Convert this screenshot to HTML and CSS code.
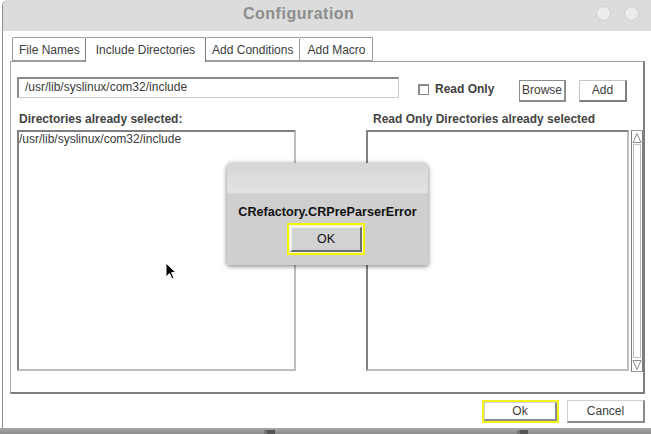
FILE: index.html
```html
<!DOCTYPE html>
<html>
<head>
<meta charset="utf-8">
<link rel="stylesheet" href="styles.css">
</head>
<body>
<div class="window">
  <div class="titlebar">
    <span class="title">Configuration</span>
    <span class="wbtn wbtn-1"></span>
    <span class="wbtn wbtn-2"></span>
  </div>
  <div class="content">
    <div class="tabs">
      <div class="tab tab-first">File Names</div>
      <div class="tab tab-active">Include Directories</div>
      <div class="tab">Add Conditions</div>
      <div class="tab tab-last">Add Macro</div>
    </div>
    <div class="panel">
      <div class="row-input">
        <div class="field">/usr/lib/syslinux/com32/include</div>
        <div class="check"></div>
        <div class="check-label">Read Only</div>
        <div class="btn btn-browse">Browse</div>
        <div class="btn btn-add">Add</div>
      </div>
      <div class="columns">
        <div class="col-left">
          <div class="label">Directories already selected:</div>
          <div class="list list-left">
            <div class="list-item">/usr/lib/syslinux/com32/include</div>
          </div>
        </div>
        <div class="col-right">
          <div class="label label-right">Read Only Directories already selected</div>
          <div class="list-wrap">
            <div class="list list-right"></div>
            <div class="scrollbar">
              <div class="sb-btn">
                <svg width="10" height="12" viewBox="0 0 10 12"><path d="M1 10.5 L5 1.5 L9 10.5 Z" fill="none" stroke="#8a8a8a" stroke-width="1"/></svg>
              </div>
              <div class="sb-track"><div class="sb-thumb"></div></div>
              <div class="sb-btn">
                <svg width="10" height="12" viewBox="0 0 10 12"><path d="M1 1.5 L5 10.5 L9 1.5 Z" fill="none" stroke="#8a8a8a" stroke-width="1"/></svg>
              </div>
            </div>
          </div>
        </div>
      </div>
    </div>
    <div class="footer">
      <div class="focus-ring"><div class="fbtn">Ok</div></div>
      <div class="fbtn fbtn-cancel">Cancel</div>
    </div>
  </div>
</div>
<div class="bottom-strip">
  <span class="mark mark-1"></span>
  <span class="mark mark-2"></span>
</div>

<div class="dialog">
  <div class="dialog-title"></div>
  <div class="dialog-body">
    <div class="dialog-msg">CRefactory.CRPreParserError</div>
    <div class="dialog-ring"><div class="dialog-ok">OK</div></div>
  </div>
</div>

<svg class="cursor" width="12" height="19" viewBox="0 0 12 19">
  <path d="M1 1 L1 15 L4.5 11.5 L7 17 L9 16 L6.6 10.6 L11 10.6 Z" fill="#000" stroke="#fff" stroke-width="1"/>
</svg>
</body>
</html>
```

FILE: styles.css
```css
html, body {
  margin: 0;
  padding: 0;
}
body {
  width: 651px;
  height: 434px;
  overflow: hidden;
  background: #ffffff;
  font-family: "Liberation Sans", Arial, sans-serif;
  position: relative;
}
.window {
  margin-left: 2px;
  width: 649px;
  height: 428px;
  border-left: 1px solid #8e8e8e;
  box-sizing: border-box;
  background: #fff;
  display: flex;
  flex-direction: column;
  border-top-left-radius: 6px;
}
.titlebar {
  height: 31px;
  background: #dcdcdc;
  position: relative;
  border-top-left-radius: 6px;
  display: flex;
  align-items: center;
  padding-bottom: 3px;
  box-sizing: border-box;
}
.title {
  margin-left: 240px;
  font-weight: bold;
  font-size: 16px;
  color: #8d8d8d;
  letter-spacing: 0.5px;
}
.wbtn {
  position: absolute;
  top: 7px;
  width: 13px;
  height: 13px;
  border-radius: 50%;
  background: #ececec;
  box-shadow: 0 0 0 1px #d0d0d0;
}
.wbtn-1 { left: 594px; }
.wbtn-2 { left: 622px; }

.content {
  flex: 1;
  padding: 6px 3px 0 7px;
  display: flex;
  flex-direction: column;
}
.tabs {
  display: flex;
  margin-left: 2px;
  height: 24px;
  position: relative;
  z-index: 1;
}
.tab {
  box-sizing: border-box;
  height: 24px;
  padding: 0 6px 0 6px;
  border: 1px solid #9c9c9c;
  border-right: none;
  border-top-left-radius: 2px;
  font-size: 12px;
  color: #3c3c3c;
  line-height: 24px;
  background: #fff;
}
.tab-first { padding: 0 5px 0 6px; }
.tab-last {
  padding: 0 7px 0 7px;
  border-right: 1px solid #9c9c9c;
}
.tab-active {
  height: 25px;
  padding: 0 10px 0 10px;
  border-bottom: none;
  border-left: 1px solid #7e7e7e;
  border-right: 1px solid #7e7e7e;
}
.tab-active + .tab { border-left: none; }

.panel {
  box-sizing: border-box;
  width: 635px;
  height: 333px;
  border-top: 1px solid #9c9c9c;
  border-left: 1px solid #a8a8a8;
  border-right: 2px solid #7e7e7e;
  border-bottom: 2px solid #7e7e7e;
  padding: 15px 0 0 6px;
  display: flex;
  flex-direction: column;
}
.row-input {
  display: flex;
  align-items: flex-start;
  height: 25px;
}
.field {
  box-sizing: border-box;
  width: 382px;
  height: 21px;
  border-top: 2px solid #8a8a8a;
  border-left: 2px solid #8a8a8a;
  border-right: 1px solid #c9c9c9;
  border-bottom: 1px solid #c9c9c9;
  font-size: 12px;
  color: #3a3a3a;
  line-height: 17px;
  padding-left: 6px;
}
.check {
  box-sizing: border-box;
  width: 11px;
  height: 11px;
  border: 1px solid #8a8a8a;
  border-top-width: 2px;
  border-left-width: 2px;
  margin: 7px 0 0 19px;
  background: #fff;
}
.check-label {
  margin: 5px 0 0 6px;
  font-size: 12px;
  font-weight: bold;
  color: #3f3f3f;
  width: 84px;
}
.btn {
  box-sizing: border-box;
  height: 22px;
  margin-top: 3px;
  font-size: 12px;
  color: #3c3c3c;
  text-align: center;
  line-height: 19px;
}
.btn-browse {
  width: 47px;
  border: 2px solid #8d8d8d;
  border-top-width: 1px;
  border-left-width: 1px;
}
.btn-add {
  width: 48px;
  margin-left: 13px;
  border: 1px solid #c6c6c6;
  border-right: 2px solid #7e7e7e;
  border-bottom: 2px solid #7e7e7e;
}

.columns {
  display: flex;
  margin-top: 10px;
}
.col-left {
  width: 279px;
  display: flex;
  flex-direction: column;
}
.col-right {
  margin-left: 70px;
  display: flex;
  flex-direction: column;
}
.label {
  font-size: 12px;
  font-weight: bold;
  color: #444;
  height: 15px;
  line-height: 15px;
  padding-left: 2px;
  margin-bottom: 3px;
}
.label-right { padding-left: 7px; }
.list {
  box-sizing: border-box;
  height: 241px;
  border-top: 2px solid #808080;
  border-left: 2px solid #808080;
  border-right: 2px solid #bdbdbd;
  border-bottom: 2px solid #bdbdbd;
  background: #fff;
}
.list-left { width: 279px; }
.list-item {
  font-size: 12px;
  color: #3a3a3a;
  line-height: 15px;
}
.list-wrap {
  display: flex;
}
.list-right { width: 263px; }
.scrollbar {
  box-sizing: border-box;
  margin-left: 2px;
  width: 12px;
  height: 242px;
  border-left: 1px solid #7e7e7e;
  border-right: 1px solid #7e7e7e;
  border-top: 1px solid #9a9a9a;
  border-bottom: 1px solid #9a9a9a;
  display: flex;
  flex-direction: column;
}
.sb-btn {
  height: 13px;
  display: flex;
  align-items: center;
  justify-content: center;
}
.sb-track {
  flex: 1;
  padding: 0 1px;
  display: flex;
}
.sb-thumb {
  flex: 1;
  border-left: 1px solid #b9b9b9;
  border-right: 1px solid #b9b9b9;
  border-top: 1px solid #c4c4c4;
  border-bottom: 1px solid #c4c4c4;
}

.footer {
  display: flex;
  justify-content: flex-end;
  align-items: flex-start;
  padding-top: 6px;
  padding-right: 3px;
}
.focus-ring {
  border: 2px solid #f3f21c;
  margin-right: 8px;
}
.fbtn {
  box-sizing: border-box;
  width: 73px;
  height: 19px;
  border: 1px solid #d0d0d0;
  border-right: 2px solid #8a8a8a;
  border-bottom: 2px solid #8a8a8a;
  font-size: 12px;
  color: #3c3c3c;
  text-align: center;
  line-height: 17px;
  background: #fff;
}
.fbtn-cancel {
  width: 78px;
  height: 23px;
  line-height: 21px;
}

.bottom-strip {
  height: 6px;
  background: linear-gradient(#a8a8a8, #8c8c8c);
  position: relative;
}
.mark {
  position: absolute;
  top: 2px;
  width: 11px;
  height: 4px;
  background: #555;
  border-left: 3px solid #777;
  box-sizing: border-box;
}
.mark-1 { left: 264px; }
.mark-2 { left: 517px; }

.dialog {
  position: absolute;
  left: 227px;
  top: 163px;
  width: 201px;
  height: 102px;
  border-radius: 5px 5px 0 0;
  background: #cfcfcf;
  box-shadow: 0 1px 5px rgba(0,0,0,0.55);
  display: flex;
  flex-direction: column;
  overflow: hidden;
}
.dialog-title {
  height: 30px;
  background: linear-gradient(#d6d6d6, #e2e2e2);
  border-bottom: 1px solid #d4d4d4;
}
.dialog-body {
  flex: 1;
  display: flex;
  flex-direction: column;
  align-items: center;
}
.dialog-msg {
  margin-top: 11px;
  font-size: 12.6px;
  font-weight: bold;
  color: #111;
}
.dialog-ring {
  margin-top: 4px;
  margin-right: 3px;
  border: 2px solid #f5f500;
  padding: 1px;
  background: #f7f7dc;
}
.dialog-ok {
  box-sizing: border-box;
  width: 72px;
  height: 26px;
  background: #d2d2d2;
  border-top: 2px solid #f2f2f2;
  border-left: 2px solid #f2f2f2;
  border-right: 2px solid #6e6e6e;
  border-bottom: 2px solid #6e6e6e;
  font-size: 12.5px;
  color: #111;
  text-align: center;
  line-height: 22px;
}
.cursor {
  position: absolute;
  left: 165px;
  top: 262px;
}
```
